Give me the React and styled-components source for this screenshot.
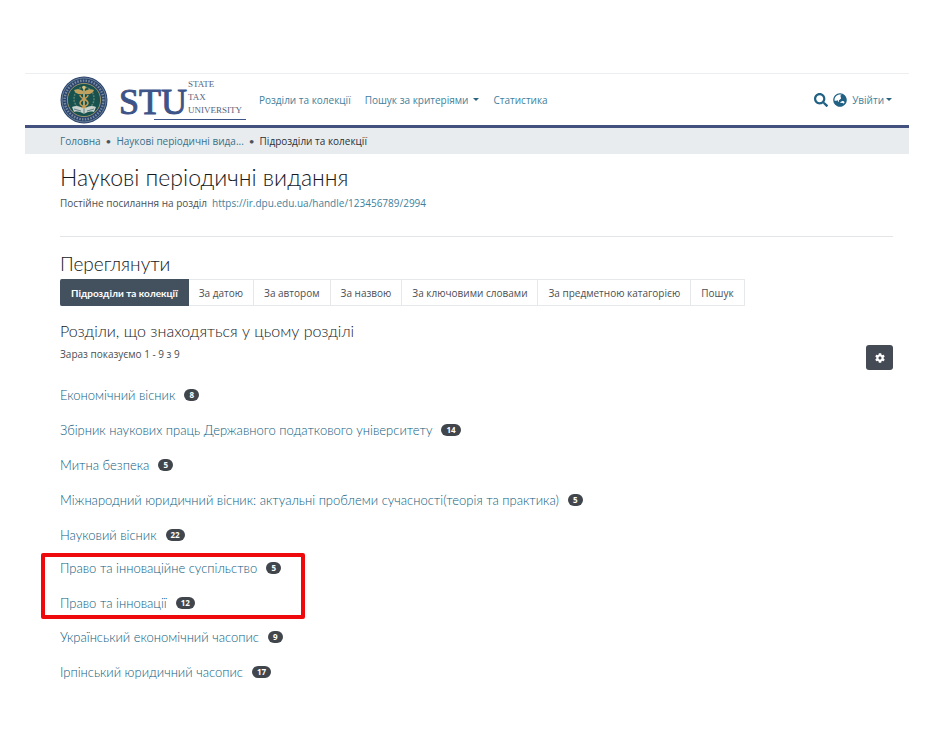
import React from "react";
import styled, { createGlobalStyle } from "styled-components";
import { FaGlobeAsia, FaSearch, FaCog } from "react-icons/fa";

const GlobalStyle = createGlobalStyle`
  *, *::before, *::after { box-sizing: border-box; }
  body {
    margin: 0;
    background: #fff;
    color: #4a4f55;
    font-family: "Open Sans", "Noto Sans", sans-serif;
    font-size: 10px;
    line-height: 14px;
  }
  h1, h2, h3 {
    color: #15191d;
    font-family: Lato, "Open Sans", sans-serif;
    font-weight: 300;
  }
  a { color: #3f819c; text-decoration: none; }
  a:hover { text-decoration: underline; }
  button { font: inherit; cursor: pointer; }
  ul, ol { list-style: none; margin: 0; padding: 0; }
`;

const Page = styled.div`
  padding: 73px 43px 40px 25px;
`;

const Header = styled.header`
  display: flex;
  align-items: center;
  height: 55px;
  padding: 0 17px 0 35px;
  border-top: 1px solid #eceef0;
  border-bottom: 3px solid #43517f;
`;

const Brand = styled.a`
  display: flex;
  align-items: center;
  gap: 12px;
  margin-right: 13px;
`;

const Seal = styled.svg`
  display: block;
  width: 48px;
  height: 48px;
`;

const Wordmark = styled.svg`
  display: block;
  width: 126px;
  height: 48px;
  overflow: visible;
  font-family: "Liberation Serif", serif;
`;

const Nav = styled.nav`
  display: flex;
  gap: 14px;
`;

const MenuButton = styled.button`
  display: flex;
  align-items: center;
  gap: ${(p) => p.$gap}px;
  padding: 0;
  border: 0;
  background: none;
  color: #3f819c;
`;

const Caret = styled.span`
  border: 3px solid transparent;
  border-top-color: #2b627c;
  border-bottom-width: 0;
`;

const Tools = styled.div`
  display: flex;
  align-items: center;
  gap: 5px;
  margin-left: auto;
`;

const IconButton = styled.button`
  display: flex;
  padding: 0;
  border: 0;
  background: none;
  color: #216184;
  font-size: 14px;
`;

const Breadcrumbs = styled.ol`
  display: flex;
  align-items: center;
  height: 26px;
  padding: 0 35px;
  background: #e9ecef;
`;

const Crumb = styled.li`
  color: #2b3036;
  a { color: #37708a; }
  & + &::before {
    content: "•";
    margin: 0 5px;
    color: #4b545d;
    font-family: Lato, sans-serif;
  }
`;

const Main = styled.main`
  padding: 8px 16px 0 35px;
`;

const Title = styled.h1`
  margin: 0;
  font-size: 23px;
  line-height: 30px;
`;

const Permalink = styled.p`
  display: flex;
  gap: 5px;
  margin: 4px 0 26px;
`;

const Divider = styled.hr`
  margin: 0 0 16px;
  border: 0;
  border-top: 1px solid #e3e5e7;
`;

const Subtitle = styled.h2`
  margin: 0 0 4px;
  font-size: 19px;
  line-height: 22px;
`;

const Tabs = styled.nav`
  display: flex;
  width: fit-content;
`;

const Tab = styled.a`
  padding: 6px 10px 5px;
  border: 1px solid #e6e8ea;
  border-left-width: 0;
  color: #4a4f55;

  &[aria-current] {
    padding-left: 11px;
    border-color: #43515f;
    border-radius: 2px 0 0 2px;
    background: #43515f;
    color: #fff;
    font-family: Lato, "Open Sans", sans-serif;
    font-weight: 700;
  }
`;

const SectionTitle = styled.h3`
  margin: 15px 0 4px;
  font-size: 16px;
  line-height: 20px;
`;

const ListHeader = styled.div`
  display: flex;
  justify-content: space-between;
  align-items: flex-start;
`;

const Summary = styled.p`
  margin: 2px 0 0;
`;

const SettingsButton = styled.button`
  display: grid;
  place-items: center;
  width: 27px;
  height: 25px;
  padding: 0;
  border: 0;
  border-radius: 3px;
  background: #454b55;
  color: #fff;
`;

const List = styled.ul`
  display: grid;
  gap: 15px;
`;

const Row = styled.li`
  display: flex;
  align-items: center;
  gap: 9px;
  font-family: Lato, "Open Sans", sans-serif;
  font-size: 13px;
  line-height: 20px;
  font-weight: 300;
  a { color: #0e5c7e; }
`;

const Collections = styled.div`
  display: grid;
  gap: 8px;
  margin-top: 15px;
`;

const Badge = styled.span`
  min-width: 15px;
  padding: 0 5px;
  border-radius: 6px;
  background: #41464c;
  color: #fff;
  font-family: "Open Sans", sans-serif;
  font-size: 8px;
  line-height: 12px;
  font-weight: 700;
  text-align: center;
`;

const Highlight = styled.div`
  width: 264px;
  margin-left: -19px;
  padding: 1px 15px 2px;
  border: 4px solid #ee0a0c;
  border-radius: 2px;
`;

const before = [
  ["Економічний вісник", 8],
  ["Збірник наукових праць Державного податкового університету", 14],
  ["Митна безпека", 5],
  ["Міжнародний юридичний вісник: актуальні проблеми сучасності(теорія та практика)", 5],
  ["Науковий вісник", 22],
];
const marked = [
  ["Право та інноваційне суспільство", 5],
  ["Право та інновації", 12],
];
const after = [
  ["Український економічний часопис", 9],
  ["Ірпінський юридичний часопис", 17],
];
const tabs = [
  "Підрозділи та колекції",
  "За датою",
  "За автором",
  "За назвою",
  "За ключовими словами",
  "За предметною катагорією",
  "Пошук",
];

function CollectionList({ items }) {
  return (
    <List>
      {items.map(([name, count]) => (
        <Row key={name}>
          <a href="#">{name}</a>
          <Badge>{count}</Badge>
        </Row>
      ))}
    </List>
  );
}

function UniversitySeal() {
  return (
    <Seal viewBox="0 0 48 48" aria-hidden="true">
      <circle cx="24" cy="24" r="23.5" fill="#29436c" />
      <circle cx="24" cy="24" r="22" fill="none" stroke="#8b9dae" strokeWidth="0.7" />
      <circle cx="24" cy="24" r="19.4" fill="none" stroke="#9aa9b4" strokeWidth="2.4" strokeDasharray="1.5 1.3" opacity="0.7" />
      <circle cx="24" cy="24" r="16.6" fill="#17524f" stroke="#b9a66c" strokeWidth="0.8" />
      <path d="M24 11c-5 0-10 5-10 12 0 5 4 10 10 11 6-1 10-6 10-11 0-7-5-12-10-12z" fill="none" stroke="#5d8070" strokeWidth="1.5" strokeDasharray="2 1" />
      <path d="M23 15c-3-2-6-2-9-1 1 3 4 5 9 4zM25 15c3-2 6-2 9-1-1 3-4 5-9 4z" fill="#c2a25c" />
      <path d="M24 12v23" stroke="#d9c07c" strokeWidth="1.5" />
      <circle cx="24" cy="11.5" r="1.8" fill="#d9c07c" />
      <path d="M20 19c0 4 8 4 8 8s-7 3-7 7M28 19c0 4-8 4-8 8s7 3 7 7" fill="none" stroke="#c89b54" strokeWidth="1.4" />
      <path d="M12 31c4-2 8-1 12 2 4-3 8-4 12-2l-2 5c-4-1-7 0-10 2-3-2-6-3-10-2z" fill="#c8d1cc" />
      <path d="M24 33v5M14 33l7 2M34 33l-7 2" stroke="#365a62" strokeWidth="0.7" />
    </Seal>
  );
}

function UniversityWordmark() {
  return (
    <Wordmark viewBox="0 0 126 48" role="img" aria-label="State Tax University">
      <text x="-1" y="38" fontSize="36" fill="#3d5488" stroke="#3d5488" strokeWidth="1">STU</text>
      <g fill="#56627c" fontSize="9">
        <text x="68" y="11">STATE</text>
        <text x="68" y="24">TAX</text>
        <text x="68" y="37">UNIVERSITY</text>
      </g>
      <path d="M34 43.5h92" stroke="#3d5488" strokeWidth="1.2" />
    </Wordmark>
  );
}

export default function App() {
  return (
    <>
      <GlobalStyle />
      <Page>
        <Header>
          <Brand href="#">
            <UniversitySeal />
            <UniversityWordmark />
          </Brand>
          <Nav>
            <a href="#">Розділи та колекції</a>
            <MenuButton type="button" $gap={5}>
              Пошук за критеріями <Caret />
            </MenuButton>
            <a href="#">Статистика</a>
          </Nav>
          <Tools>
            <IconButton type="button" aria-label="Пошук">
              <FaSearch />
            </IconButton>
            <IconButton type="button" aria-label="Мова">
              <FaGlobeAsia />
            </IconButton>
            <MenuButton type="button" $gap={2}>
              Увійти <Caret />
            </MenuButton>
          </Tools>
        </Header>
        <Breadcrumbs>
          <Crumb><a href="#">Головна</a></Crumb>
          <Crumb><a href="#">Наукові періодичні вида...</a></Crumb>
          <Crumb aria-current="page">Підрозділи та колекції</Crumb>
        </Breadcrumbs>
        <Main>
          <Title>Наукові періодичні видання</Title>
          <Permalink>
            Постійне посилання на розділ
            <a href="#">https://ir.dpu.edu.ua/handle/123456789/2994</a>
          </Permalink>
          <Divider />
          <Subtitle>Переглянути</Subtitle>
          <Tabs>
            {tabs.map((tab, i) => (
              <Tab key={tab} href="#" aria-current={i === 0 ? "page" : undefined}>
                {tab}
              </Tab>
            ))}
          </Tabs>
          <SectionTitle>Розділи, що знаходяться у цьому розділі</SectionTitle>
          <ListHeader>
            <Summary>Зараз показуємо 1 - 9 з 9</Summary>
            <SettingsButton type="button" aria-label="Налаштування">
              <FaCog />
            </SettingsButton>
          </ListHeader>
          <Collections>
            <CollectionList items={before} />
            <Highlight>
              <CollectionList items={marked} />
            </Highlight>
            <CollectionList items={after} />
          </Collections>
        </Main>
      </Page>
    </>
  );
}
